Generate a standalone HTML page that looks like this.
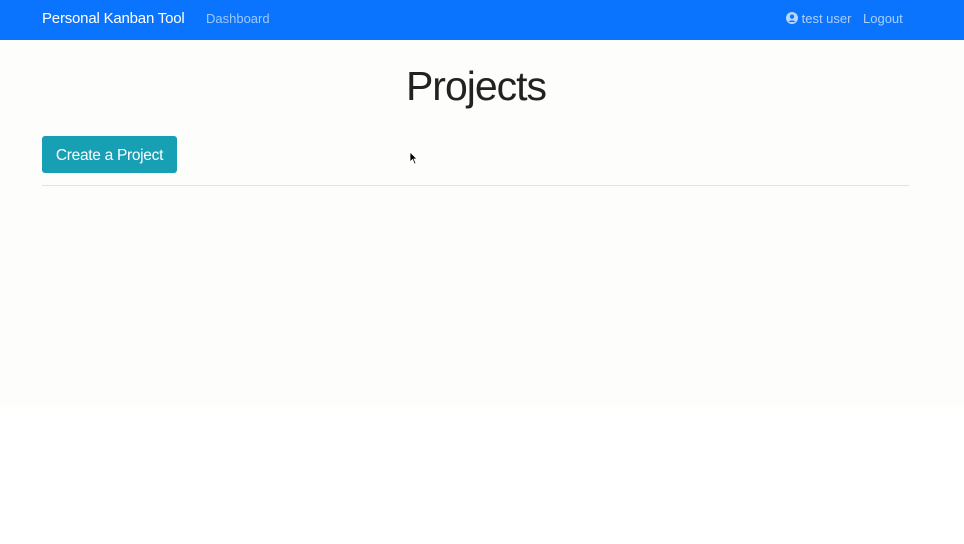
<!DOCTYPE html>
<html><head><meta charset="utf-8"><style>
html,body{margin:0;padding:0;width:964px;height:544px;background:#fff;font-family:"Liberation Sans",sans-serif;overflow:hidden}
.nav{position:absolute;left:0;top:0;width:964px;height:40px;background:#0a74ff}
.brand{position:absolute;left:42px;top:10px;font-size:15px;color:#fff;letter-spacing:-0.2px}
.dash{position:absolute;left:206px;top:11px;font-size:13px;color:rgba(255,255,255,.6)}
.user{position:absolute;left:786px;top:11px;font-size:13px;color:rgba(255,255,255,.65)}
.out{position:absolute;left:863px;top:11px;font-size:13px;color:rgba(255,255,255,.65)}
.main{position:absolute;left:0;top:40px;width:964px;height:367px;background:#fdfdfb}
h1{position:absolute;left:0;width:952px;top:63px;margin:0;text-align:center;font-weight:300;font-size:41px;letter-spacing:-1px;color:#222}
.btn{position:absolute;left:42px;top:136px;width:135px;height:37px;background:#17a0b4;border-radius:3px;color:#fff;font-size:15.5px;line-height:39px;text-align:center;letter-spacing:-0.3px}
.hr{position:absolute;left:42px;top:185px;width:867px;height:1px;background:#e2e2e2}
</style></head><body>
<div class="nav">
<div class="brand">Personal Kanban Tool</div>
<div class="dash">Dashboard</div>
<div class="user"><svg width="12" height="12" viewBox="0 0 12 12" style="vertical-align:-1px"><circle cx="6" cy="6" r="6" fill="rgba(255,255,255,.7)"/><circle cx="6" cy="4.6" r="2.1" fill="#0a74ff"/><path d="M2.3 10 Q6 6.5 9.7 10" fill="#0a74ff"/></svg> test user</div>
<div class="out">Logout</div>
</div>
<div class="main"></div>
<h1>Projects</h1>
<div class="btn">Create a Project</div>
<div class="hr"></div>
<svg style="position:absolute;left:409px;top:151px" width="9" height="14" viewBox="0 0 9 14"><path d="M1 1 L1 11 L3.5 8.5 L5.5 13 L7 12.3 L5 8 L8 8 Z" fill="#000" stroke="#fff" stroke-width=".8"/></svg>
</body></html>
